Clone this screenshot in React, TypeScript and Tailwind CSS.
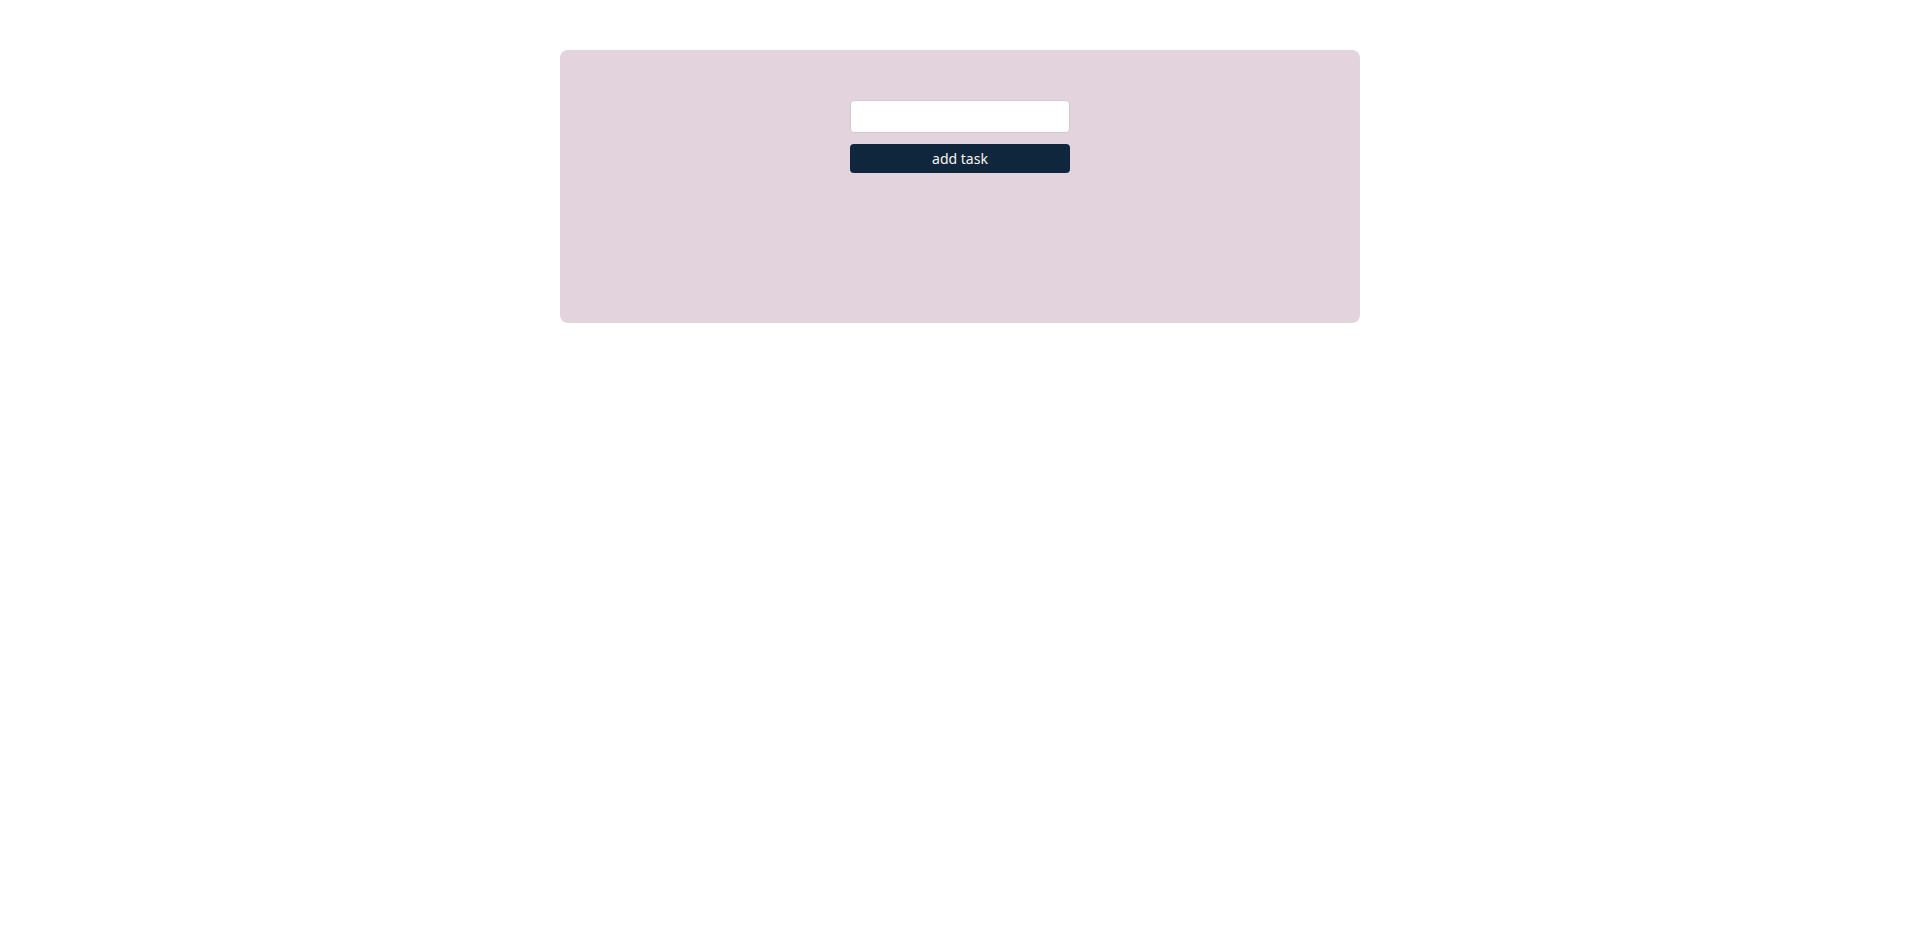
export default function App() {
  return (
    <div className="min-h-screen bg-white pt-[50px] font-['Noto_Sans',sans-serif]">
      <div className="mx-auto flex h-[273px] w-[800px] flex-col items-center rounded-lg bg-[#e2d3dd] pt-[50px]">
        <input
          type="text"
          className="h-[33px] w-[220px] rounded border border-[#cfc8cc] bg-white px-2 text-sm outline-none"
        />
        <button className="mt-[11px] h-[29px] w-[220px] rounded bg-[#10263d] text-[14px] text-[#faf5ea]">
          add task
        </button>
      </div>
    </div>
  );
}
